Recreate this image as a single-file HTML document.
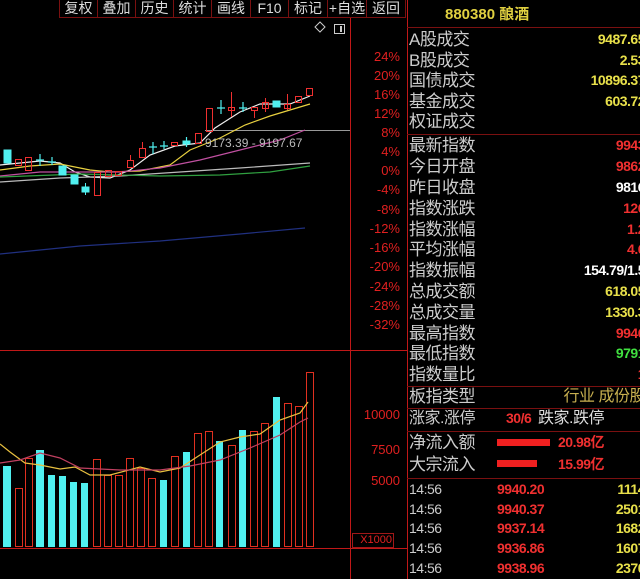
<!DOCTYPE html>
<html><head><meta charset="utf-8"><style>
body{margin:0;background:#000;width:640px;height:579px;overflow:hidden;position:relative;font-family:"Liberation Sans","Noto Sans CJK SC",sans-serif}
.tb{position:absolute;top:0;height:17px;border-left:1px solid #7a1010;border-bottom:1px solid #7a1010;color:#ddd;font-size:14px;line-height:16px;text-align:center}
.r{position:absolute;left:409px;width:231px;height:21px;font-size:17px;line-height:21px;color:#ccc;letter-spacing:-0.5px}
.r span{position:absolute;right:-5px;top:0;font-size:14px;font-weight:bold}
.y{color:#e8e04a}.rd{color:#f03030}.w{color:#fff}.g{color:#40e040}
.sep{position:absolute;left:407px;width:233px;height:1px;background:#7a1010}
.ax{position:absolute;color:#e02020;font-size:13px;right:240px;text-align:right}
</style></head><body>
<div class="tb" style="left:59px;width:37px">复权</div>
<div class="tb" style="left:97px;width:37px">叠加</div>
<div class="tb" style="left:135px;width:37px">历史</div>
<div class="tb" style="left:173px;width:37px">统计</div>
<div class="tb" style="left:211px;width:38px">画线</div>
<div class="tb" style="left:250px;width:37px">F10</div>
<div class="tb" style="left:288px;width:38px">标记</div>
<div class="tb" style="left:327px;width:38px">+自选</div>
<div class="tb" style="left:366px;width:38px;border-right:1px solid #7a1010">返回</div>

<svg width="640" height="579" style="position:absolute;left:0;top:0">
<line x1="350.5" y1="18" x2="350.5" y2="579" stroke="#c01818"/>
<line x1="407.5" y1="0" x2="407.5" y2="579" stroke="#c01818"/>
<line x1="0" y1="350.5" x2="407" y2="350.5" stroke="#c01818"/>
<line x1="0" y1="548.5" x2="407" y2="548.5" stroke="#c01818"/>
<rect x="352.5" y="533.5" width="41" height="14" fill="none" stroke="#a01818"/>
<path d="M320 22 l5 5 -5 5 -5 -5z" fill="none" stroke="#ccc"/>
<rect x="334.5" y="24.5" width="10" height="9" fill="none" stroke="#ccc"/><line x1="341" y1="26" x2="341" y2="32" stroke="#ccc" stroke-width="2"/>
<line x1="205" y1="130.5" x2="350" y2="130.5" stroke="#999"/>
<polyline points="0,165 40,161 60,163 75,172 90,177 110,178 130,170 150,155 175,146 200,143 215,128 240,112 260,104 290,104 310,96" fill="none" stroke="#eee" stroke-width="1.2"/>
<polyline points="0,170 30,166 60,164 90,170 110,172 140,171 170,165 190,150 220,138 245,125 270,116 310,104" fill="none" stroke="#e8d040" stroke-width="1.2"/>
<polyline points="0,176 40,172 80,172 120,172 160,168 200,160 240,150 280,140 305,130" fill="none" stroke="#c050a0" stroke-width="1.2"/>
<polyline points="0,182 60,178 120,176 180,172 240,168 310,163" fill="none" stroke="#bbb" stroke-width="1.2"/>
<polyline points="0,177 80,174 160,176 220,175 270,172 310,166" fill="none" stroke="#30a040" stroke-width="1.2"/>
<polyline points="0,254 80,246 160,241 240,234 305,228" fill="none" stroke="#203080" stroke-width="1.2"/>
<g stroke="#f03030" fill="none">
<rect x="15.5" y="159.5" width="6" height="6"/><rect x="25.5" y="157.5" width="6" height="13"/>
<rect x="94.5" y="172.5" width="6" height="23"/><rect x="105.5" y="170.5" width="6" height="6"/><rect x="115.5" y="171.5" width="6" height="4"/>
<rect x="127.5" y="160.5" width="6" height="7"/><line x1="130.5" y1="155" x2="130.5" y2="160"/>
<rect x="139.5" y="148.5" width="6" height="9"/><line x1="142.5" y1="142" x2="142.5" y2="148"/>
<rect x="171.5" y="142.5" width="6" height="3"/><rect x="195.5" y="133.5" width="6" height="10"/>
<rect x="206.5" y="108.5" width="6" height="23"/>
<rect x="228.5" y="107.5" width="6" height="3"/><line x1="231.5" y1="92" x2="231.5" y2="117"/>
<rect x="251.5" y="107.5" width="6" height="3"/><line x1="254.5" y1="110" x2="254.5" y2="118"/>
<rect x="262.5" y="102.5" width="6" height="6"/><line x1="265.5" y1="98" x2="265.5" y2="112"/>
<rect x="284.5" y="104.5" width="6" height="4"/><line x1="287.5" y1="94" x2="287.5" y2="110"/>
<rect x="295.5" y="96.5" width="6" height="6"/><rect x="306.5" y="88.5" width="6" height="7"/>
</g>
<g fill="#50f0f0" stroke="#50f0f0">
<rect x="4" y="150" width="7" height="13"/><rect x="59" y="166" width="7" height="9"/><rect x="71" y="175" width="7" height="9"/><rect x="82" y="187" width="7" height="5"/><line x1="85.5" y1="183" x2="85.5" y2="195"/>
<rect x="183" y="141" width="7" height="3"/><rect x="273" y="101" width="7" height="6"/>
<path d="M36 160h8M40 154v12M48 162h8M52 157v8M149 147h8M153 142v12M160 146h8M164 141v8M217 108h8M221 100v14M239 108h8M243 102v10M183 142h7M186.5 137v10" stroke-width="1.2" fill="none"/>
</g>
<text x="205" y="147" fill="#bbb" font-size="12" font-family="Liberation Sans">9173.39 - 9197.67</text>
<g stroke="#e03020" fill="none">
<rect x="15.5" y="488.5" width="7" height="58"/><rect x="25.5" y="458.5" width="7" height="88"/>
<rect x="93.5" y="459.5" width="7" height="87"/><rect x="104.5" y="475.5" width="7" height="71"/><rect x="115.5" y="475.5" width="7" height="71"/><rect x="126.5" y="458.5" width="7" height="88"/><rect x="137.5" y="468.5" width="7" height="78"/><rect x="148.5" y="478.5" width="7" height="68"/>
<rect x="171.5" y="456.5" width="7" height="90"/><rect x="194.5" y="433.5" width="7" height="113"/><rect x="205.5" y="431.5" width="7" height="115"/><rect x="228.5" y="445.5" width="7" height="101"/><rect x="250.5" y="431.5" width="7" height="115"/><rect x="261.5" y="423.5" width="7" height="123"/><rect x="284.5" y="403.5" width="7" height="143"/><rect x="295.5" y="406.5" width="7" height="140"/><rect x="306.5" y="372.5" width="7" height="174"/>
</g>
<g fill="#50f0f0">
<rect x="3" y="466" width="8" height="81"/><rect x="36" y="450" width="8" height="97"/><rect x="48" y="475" width="7" height="72"/><rect x="59" y="476" width="7" height="71"/><rect x="70" y="482" width="7" height="65"/><rect x="81" y="483" width="7" height="64"/><rect x="160" y="480" width="7" height="67"/><rect x="183" y="452" width="7" height="95"/><rect x="216" y="441" width="7" height="106"/><rect x="239" y="430" width="7" height="117"/><rect x="273" y="397" width="7" height="150"/>
</g>
<polyline points="0,444 10,452 25,463 40,465 60,469 75,467 90,475 110,475 140,467 160,472 180,468 200,455 220,442 240,437 260,434 280,420 300,413 308,402" fill="none" stroke="#e8c040" stroke-width="1.2"/>
<polyline points="0,463 20,460 40,453 60,458 80,468 120,470 160,470 190,466 220,460 250,448 280,435 300,422 308,418" fill="none" stroke="#c04060" stroke-width="1.2"/>
</svg>

<div class="ax" style="top:49px">24%</div><div class="ax" style="top:68px">20%</div><div class="ax" style="top:87px">16%</div><div class="ax" style="top:106px">12%</div><div class="ax" style="top:125px">8%</div><div class="ax" style="top:144px">4%</div><div class="ax" style="top:163px">0%</div><div class="ax" style="top:182px">-4%</div><div class="ax" style="top:202px">-8%</div><div class="ax" style="top:221px">-12%</div><div class="ax" style="top:240px">-16%</div><div class="ax" style="top:259px">-20%</div><div class="ax" style="top:279px">-24%</div><div class="ax" style="top:298px">-28%</div><div class="ax" style="top:317px">-32%</div>
<div class="ax" style="top:407px">10000</div><div class="ax" style="top:442px">7500</div><div class="ax" style="top:473px">5000</div>
<div class="ax" style="top:534px;right:248px;font-size:11px">X1000</div>

<div style="position:absolute;left:445px;top:3px;font-size:15px;color:#e0d040;font-weight:bold">880380 酿酒</div>
<div class="sep" style="top:27px"></div>
<div class="r" style="top:29px">A股成交<span class="y">9487.65</span></div>
<div class="r" style="top:50px">B股成交<span class="y">2.53</span></div>
<div class="r" style="top:70px">国债成交<span class="y">10896.37</span></div>
<div class="r" style="top:91px">基金成交<span class="y">603.72</span></div>
<div class="r" style="top:111px">权证成交</div>
<div class="sep" style="top:134px"></div>
<div class="r" style="top:135px">最新指数<span class="rd">9943</span></div>
<div class="r" style="top:156px">今日开盘<span class="rd">9862</span></div>
<div class="r" style="top:177px">昨日收盘<span class="w">9816</span></div>
<div class="r" style="top:198px">指数涨跌<span class="rd">126</span></div>
<div class="r" style="top:219px">指数涨幅<span class="rd">1.2</span></div>
<div class="r" style="top:239px">平均涨幅<span class="rd">4.6</span></div>
<div class="r" style="top:260px">指数振幅<span class="w">154.79/1.5</span></div>
<div class="r" style="top:281px">总成交额<span class="y">618.05</span></div>
<div class="r" style="top:302px">总成交量<span class="y">1330.3</span></div>
<div class="r" style="top:323px">最高指数<span class="rd">9946</span></div>
<div class="r" style="top:343px">最低指数<span class="g">9791</span></div>
<div class="r" style="top:364px">指数量比<span class="rd">1</span></div>
<div class="sep" style="top:386px"></div>
<div class="r" style="top:386px">板指类型<span class="y" style="font-size:16px;color:#c8b050;font-weight:normal">行业 成份股</span></div>
<div class="sep" style="top:408px"></div>
<div class="r" style="top:408px;font-size:16px">涨家.涨停<span style="right:auto;left:97px;font-size:14px;color:#f03030">30/6</span><span style="right:auto;left:129px;font-size:16px;color:#ddd;font-weight:normal">跌家.跌停</span></div>
<div class="sep" style="top:431px"></div>
<div class="r" style="top:432px">净流入额<span class="rd" style="right:auto;left:149px">20.98亿</span></div>
<div class="r" style="top:454px">大宗流入<span class="rd" style="right:auto;left:149px">15.99亿</span></div>
<div style="position:absolute;left:497px;top:439px;width:53px;height:7px;background:#f02020"></div>
<div style="position:absolute;left:497px;top:460px;width:40px;height:7px;background:#f02020"></div>
<div class="sep" style="top:478px"></div>
<div class="r" style="top:479px;font-size:14px">14:56<span class="rd" style="right:auto;left:88px">9940.20</span><span class="y">1114</span></div>
<div class="r" style="top:499px;font-size:14px">14:56<span class="rd" style="right:auto;left:88px">9940.37</span><span class="y">2501</span></div>
<div class="r" style="top:518px;font-size:14px">14:56<span class="rd" style="right:auto;left:88px">9937.14</span><span class="y">1682</span></div>
<div class="r" style="top:538px;font-size:14px">14:56<span class="rd" style="right:auto;left:88px">9936.86</span><span class="y">1607</span></div>
<div class="r" style="top:558px;font-size:14px">14:56<span class="rd" style="right:auto;left:88px">9938.96</span><span class="y">2370</span></div>
</body></html>
